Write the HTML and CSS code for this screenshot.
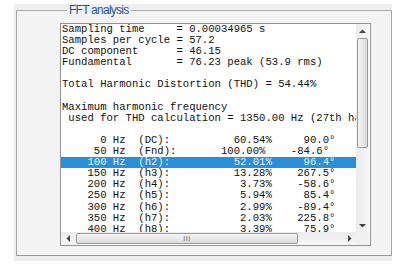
FILE: index.html
```html
<!DOCTYPE html>
<html>
<head>
<meta charset="utf-8">
<link rel="stylesheet" href="styles.css">
</head>
<body>
<div class="panel">
  <fieldset class="group">
    <legend class="title">FFT analysis</legend>
    <div class="textbox">
      <div class="content">
<div class="line">Sampling time     = 0.00034965 s</div>
<div class="line">Samples per cycle = 57.2</div>
<div class="line">DC component      = 46.15</div>
<div class="line">Fundamental       = 76.23 peak (53.9 rms)</div>
<div class="line"> </div>
<div class="line">Total Harmonic Distortion (THD) = 54.44%</div>
<div class="line"> </div>
<div class="line">Maximum harmonic frequency</div>
<div class="line"> used for THD calculation = 1350.00 Hz (27th harmonic)</div>
<div class="line"> </div>
<div class="line">      0 Hz  (DC):          60.54%     90.0°</div>
<div class="line">     50 Hz  (Fnd):       100.00%    -84.6°</div>
<div class="line sel">    100 Hz  (h2):          52.01%     96.4°</div>
<div class="line">    150 Hz  (h3):          13.28%    267.5°</div>
<div class="line">    200 Hz  (h4):           3.73%    -58.6°</div>
<div class="line">    250 Hz  (h5):           5.94%     85.4°</div>
<div class="line">    300 Hz  (h6):           2.99%    -89.4°</div>
<div class="line">    350 Hz  (h7):           2.03%    225.8°</div>
<div class="line">    400 Hz  (h8):           3.39%     75.9°</div>
      </div>
      <div class="vscroll">
        <div class="btn"><svg width="7" height="4" viewBox="0 0 7 4"><polygon points="0,4 3.5,0.5 7,4" class="arrow"/></svg></div>
        <div class="vtrack"><div class="vthumb"></div></div>
        <div class="btn"><svg width="7" height="4" viewBox="0 0 7 4"><polygon points="0,0 3.5,3.5 7,0" class="arrow"/></svg></div>
      </div>
      <div class="hscroll">
        <div class="btn"><svg width="4" height="7" viewBox="0 0 4 7"><polygon points="4,0 0.5,3.5 4,7" class="arrow"/></svg></div>
        <div class="htrack"><div class="hthumb"><span class="grip">III</span></div></div>
        <div class="btn"><svg width="4" height="7" viewBox="0 0 4 7"><polygon points="0,0 3.5,3.5 0,7" class="arrow"/></svg></div>
      </div>
      <div class="corner"></div>
    </div>
  </fieldset>
</div>
</body>
</html>
```
FILE: styles.css
```css
html, body {
  margin: 0;
  padding: 0;
  background: #ffffff;
}
body {
  width: 399px;
  height: 271px;
  overflow: hidden;
}
.panel {
  margin-left: 14px;
  margin-top: 4px;
  width: 378px;
  height: 257px;
  background: #eeeeee;
  padding: 0 0 0 2px;
  box-sizing: border-box;
}
.group {
  margin: 0;
  width: 376px;
  height: 252px;
  box-sizing: border-box;
  border: 1px solid #a9a9a9;
  border-bottom-color: #999999;
  background: #f3f3f3;
  padding: 7px 20px 0 43px;
}
.title {
  font-family: "Liberation Sans", Arial, sans-serif;
  font-size: 12px;
  line-height: 12px;
  letter-spacing: -0.75px;
  color: #1f54a8;
  padding: 0 3px 0 2px;
  margin-left: 7px;
}
.textbox {
  width: 311px;
  height: 223px;
  box-sizing: border-box;
  border: 1px solid #8f9296;
  background: #ffffff;
  display: grid;
  grid-template-columns: 295px 13px;
  grid-template-rows: 208px 13px;
}
.content {
  overflow: hidden;
  font-family: "Liberation Mono", "Courier New", monospace;
  font-size: 10.6px;
  line-height: 11.1px;
  color: #111111;
}
.line {
  white-space: pre;
  padding-left: 1px;
  min-height: 11.1px;
}
.sel {
  background: #2a8fd6;
  color: #e6f2ff;
}
.vscroll {
  display: flex;
  flex-direction: column;
  background: linear-gradient(to right, #ececec, #f6f6f6);
}
.hscroll {
  display: flex;
  background: linear-gradient(to bottom, #ececec, #f6f6f6);
}
.corner {
  background: #f0f0f0;
}
.btn {
  width: 13px;
  height: 13px;
  flex: none;
  display: flex;
  align-items: center;
  justify-content: center;
}
.arrow {
  fill: #444444;
}
.vtrack {
  flex: 1;
  padding: 1px 1px 0 1px;
}
.vthumb {
  height: 108px;
  border: 1px solid #9b9b9b;
  border-radius: 2px;
  background: linear-gradient(to right, #f4f4f4, #e6e6e6 60%, #d6d6d6);
}
.htrack {
  flex: 1;
  padding: 1px 0 1px 2px;
}
.hthumb {
  width: 220px;
  height: 9px;
  box-sizing: content-box;
  border: 1px solid #9b9b9b;
  border-radius: 2px;
  background: linear-gradient(to bottom, #f4f4f4, #e6e6e6 60%, #d6d6d6);
  display: flex;
  align-items: center;
  justify-content: center;
  overflow: hidden;
}
.grip {
  font-family: "Liberation Sans", Arial, sans-serif;
  font-size: 7px;
  line-height: 7px;
  color: #666666;
  letter-spacing: 0.5px;
}
```
